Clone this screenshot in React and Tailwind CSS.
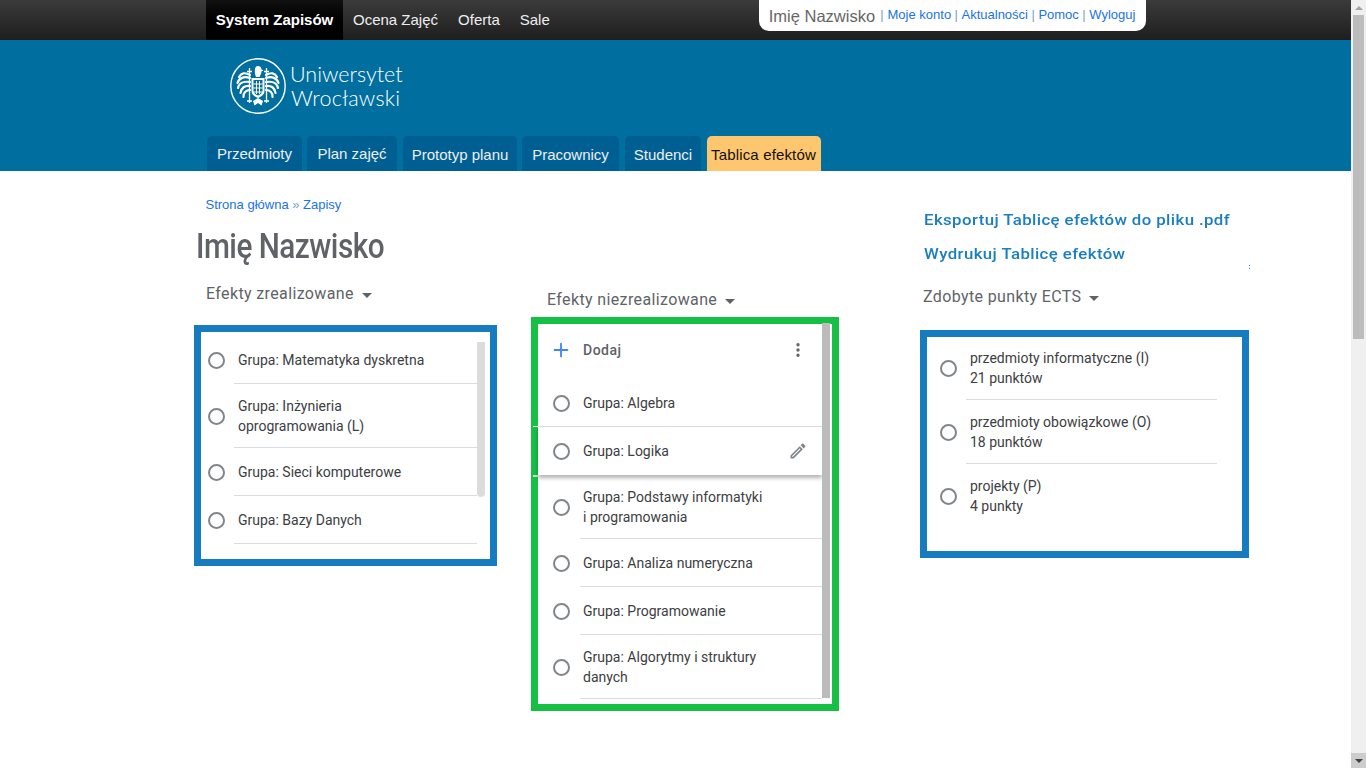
import React from "react";
import { MoreVertical, Plus } from "lucide-react";

const roboto = { fontFamily: "Roboto, sans-serif" };

const TABS = [
  { name: "Przedmioty", className: "w-[95px] pt-[1px]" },
  { name: "Plan zajęć", className: "w-[90px] ml-[5px] pt-[1px]" },
  { name: "Prototyp planu", className: "w-[114px] ml-[6px] pt-[4px]" },
  { name: "Pracownicy", className: "w-[97px] ml-[5px] pt-[4px]" },
  { name: "Studenci", className: "w-[76px] ml-[6px] pt-[4px]" },
];

const Radio = ({ className = "" }) => (
  <span className={`block w-[17px] h-[17px] shrink-0 rounded-full border-2 border-[#80868b] ${className}`} />
);

const Row = ({ lines, height = "h-12", dividerLeft = "ml-[33px]", radioMl = "ml-[7px]", textMl = "ml-[13px]", width = "w-[276px]", noDivider }) => (
  <div className={`${width}`}>
    <div className={`flex items-center ${height}`}>
      <Radio className={radioMl} />
      <div className={`${textMl} text-sm leading-5 text-[#3c4043]`}>
        {lines.map((l) => (
          <div key={l}>{l}</div>
        ))}
      </div>
    </div>
    {!noDivider && <div className={`h-px -mt-px bg-[#dadce0] ${dividerLeft}`} />}
  </div>
);

const Heading = ({ children, className = "" }) => (
  <div className={`flex items-center font-[Roboto] text-base tracking-[0.37px] text-[#5f6368] leading-5 ${className}`}>
    {children}
    <span className="ml-2 mt-[2px] border-x-[5px] border-x-transparent border-t-[5px] border-t-[#5f6368]" />
  </div>
);

const Eagle = () => (
  <svg width="58" height="58" viewBox="0 0 58 58" fill="none" className="shrink-0">
    <circle cx="29" cy="29" r="27.2" stroke="#fff" strokeWidth="1.4" />
    {/* skrzydla */}
    <g stroke="#fff" strokeWidth="2.2" strokeLinecap="round">
      <path d="M21 18C16 15 12 16 10 20M21 21C15 19 10 21 8.5 26M21 25C15 24 10 26 9 31M21 29C16 28 12 31 11.5 36M21 33C17 33 14 36 14.5 40" />
      <path d="M37 18C42 15 46 16 48 20M37 21C43 19 48 21 49.5 26M37 25C43 24 48 26 49 31M37 29C42 28 46 31 46.5 36M37 33C41 33 44 36 43.5 40" />
    </g>
    {/* glowa */}
    <path d="M29 9c2 0 3.500 1.500 3.500 3.500l2 1-2 .8c0 2-1 3.700-2 5.700h-3.500c-1-2.500-1.200-5-1.200-6.800C25.800 11 27 9 29 9z" fill="#fff" />
    {/* tarcza */}
    <path d="M22.500 21h13v13c0 3.500-3 5.500-6.500 7-3.500-1.500-6.500-3.500-6.500-7z" fill="#fff" />
    <path d="M24.500 23h9v10.500c0 2.500-2 4-4.500 5-2.500-1-4.500-2.500-4.500-5z" fill="#006f9f" />
    <path d="M27.500 24v13M30.500 24v13M24.500 27h9M24.500 31h9M24.500 35h9" stroke="#fff" strokeWidth="1" />
    {/* berla */}
    <path d="M20.500 11v35M37.500 11v35M18 14.500h5M35 14.500h5M18 44h5M35 44h5" stroke="#fff" strokeWidth="1.300" />
    {/* ogon */}
    <path d="M24 44l5-3 5 3-1.500 4.500L29 46l-3.500 2.500z" fill="#fff" />
  </svg>
);

const Scrollbar = () => (
  <div className="w-[15px] h-full shrink-0 flex flex-col bg-[#f0f0f0]">
    <div className="h-[15px] flex items-center justify-center">
      <span className="border-x-[4px] border-x-transparent border-b-[4px] border-b-[#a3a3a3]" />
    </div>
    <div className="ml-[2px] w-[11px] h-[324px] bg-[#bcbcbc]" />
    <div className="mt-auto h-[15px] flex items-center justify-center bg-[#cdcdcd]">
      <span className="border-x-[4px] border-x-transparent border-t-[4px] border-t-[#404040]" />
    </div>
  </div>
);

const App = () => {
  return (
    <div className="flex h-screen overflow-hidden bg-white" style={{ fontFamily: "'Liberation Sans', Arial, sans-serif" }}>
      <div className="w-[1351px] shrink-0">
        {/* gorny pasek */}
        <div className="h-10 flex bg-gradient-to-b from-[#3b3b3b] to-[#1e1e1e] pl-[206px] text-[15px] text-[#eeeeee]">
          <div className="w-[137px] h-10 flex items-center justify-center bg-gradient-to-b from-[#111] to-[#000] font-bold text-white">
            System Zapisów
          </div>
          <div className="ml-[10px] flex items-center h-10">Ocena Zajęć</div>
          <div className="ml-[20px] flex items-center h-10">Oferta</div>
          <div className="ml-[20px] flex items-center h-10">Sale</div>
          <div className="ml-[209px] w-[387px] h-[31px] flex items-center pl-[10px] pb-[1px] bg-white rounded-b-[10px] text-[13px] text-[#1a73e8]">
            <span className="text-[16.5px] mt-[2px] text-[#666666] mr-[5px]">Imię Nazwisko</span>
            <span className="text-[#7ba4c4]">|</span>
            <span className="ml-[4px]">Moje konto</span>
            <span className="mx-[3.5px] text-[#7ba4c4]">|</span>
            <span>Aktualności</span>
            <span className="mx-[3.5px] text-[#7ba4c4]">|</span>
            <span>Pomoc</span>
            <span className="mx-[3.5px] text-[#7ba4c4]">|</span>
            <span>Wyloguj</span>
          </div>
        </div>

        {/* naglowek */}
        <div className="h-[131px] bg-[#006f9f]">
          <div className="flex items-start pl-[229px] pt-[17px] h-[96px]">
            <Eagle />
            <div className="ml-[3px] mt-[5px] font-[Lato] font-light text-[21.5px] leading-6 text-white">
              <div>Uniwersytet</div>
              <div className="ml-[1px] tracking-[0.2px]">Wrocławski</div>
            </div>
          </div>
          <div className="flex pl-[207px]">
            {TABS.map((t) => (
              <div key={t.name} className={`h-[35px] flex items-center justify-center rounded-t-[5px] bg-[#005f92] text-[15px] text-[#eeeeee] ${t.className}`}>
                {t.name}
              </div>
            ))}
            <div className="w-[114px] ml-[6px] pt-[4px] pr-[1px] h-[35px] flex items-center justify-center rounded-t-[5px] bg-[#ffc670] text-[15px] tracking-[0.15px] text-[#111111]">
              Tablica efektów
            </div>
          </div>
        </div>

        {/* tresc */}
        <div className="flex pl-[194px]">
          {/* lewa kolumna */}
          <div className="w-[303px]">
            <div className="ml-[11.5px] mt-[26px] text-[13px] leading-[15px] text-[#1a73e8]">
              Strona główna <span className="text-[#7ba4c4]">»</span> Zapisy
            </div>
            <div className="ml-[2px] mt-[15px] h-[40px] font-[Roboto] font-medium text-[35px] leading-[40px] text-[#5f6368] tracking-[-0.6px] blur-[0.4px] origin-left scale-x-[0.85] whitespace-nowrap">
              Imię Nazwisko
            </div>
            <Heading className="ml-[12px] mt-[17px]">Efekty zrealizowane</Heading>
            <div className="relative mt-[21px] h-[241px] border-[7px] border-[#167bbf] pt-[4px]" style={roboto}>
              <Row lines={["Grupa: Matematyka dyskretna"]} />
              <Row lines={["Grupa: Inżynieria", "oprogramowania (L)"]} height="h-16" />
              <Row lines={["Grupa: Sieci komputerowe"]} />
              <Row lines={["Grupa: Bazy Danych"]} />
              <div className="absolute left-[276px] top-[10px] w-2 h-[155px] bg-[#dcdcdc] rounded-b-[4px]" />
            </div>
          </div>

          {/* srodkowa kolumna */}
          <div className="w-[308px] ml-[34px]">
            <Heading className="ml-[16px] mt-[119px]">Efekty niezrealizowane</Heading>
            <div className="relative mt-[7px] h-[394px] border-[7px] border-[#15c044]" style={roboto}>
              <div className="flex items-center w-[284px] h-[55px] pb-[4px] text-sm font-medium tracking-[0.5px] text-[#5f6368]">
                <Plus size={22} strokeWidth={2} className="ml-[12px] text-[#4285f4]" />
                <span className="ml-[11px]">Dodaj</span>
                <MoreVertical size={18} strokeWidth={2.5} className="ml-auto mr-[15px] text-[#5f6368]" />
              </div>
              <Row lines={["Grupa: Algebra"]} width="w-[284px]" radioMl="ml-[15px]" textMl="ml-[13px]" noDivider />
              <div className="relative flex items-center h-[49px] -mt-px w-[284px] bg-white border-t border-[#dadce0] shadow-[0_3px_4px_rgba(0,0,0,0.3)] z-10">
                <Radio className="ml-[15px]" />
                <span className="ml-[13px] text-sm text-[#3c4043]">Grupa: Logika</span>
                <svg width="20" height="20" viewBox="0 0 24 24" fill="#80868b" className="ml-auto mr-[14px]">
                  <path d="M14.06 9.020l.92.920L5.920 19H5v-.920l9.060-9.060M17.660 3c-.25 0-.51.1-.7.290l-1.830 1.830 3.750 3.750 1.830-1.830c.39-.39.39-1.020 0-1.410l-2.340-2.340c-.2-.2-.45-.29-.71-.29zm-3.600 3.190L3 17.250V21h3.750L17.810 9.940l-3.750-3.750z" />
                </svg>
              </div>
              <Row lines={["Grupa: Podstawy informatyki", "i programowania"]} height="h-16" width="w-[284px]" radioMl="ml-[15px]" dividerLeft="ml-[42px]" />
              <Row lines={["Grupa: Analiza numeryczna"]} width="w-[284px]" radioMl="ml-[15px]" dividerLeft="ml-[42px]" />
              <Row lines={["Grupa: Programowanie"]} width="w-[284px]" radioMl="ml-[15px]" dividerLeft="ml-[42px]" />
              <Row lines={["Grupa: Algorytmy i struktury", "danych"]} height="h-16" width="w-[284px]" radioMl="ml-[15px]" dividerLeft="ml-[42px]" />
              <div className="absolute left-[284px] -top-px w-2 h-[375px] bg-[#bbbbbb] z-20" />
              <div className="absolute -left-[5px] top-[102px] w-[5px] h-px bg-white" />
              <div className="absolute -left-[5px] top-[151px] w-[5px] h-[2px] bg-[#d8d8d8]" />
            </div>
          </div>

          {/* prawa kolumna */}
          <div className="relative w-[329px] ml-[81px]">
            <div className="ml-[4px] mt-[40px] font-[Roboto] font-medium text-[15px] leading-[18px] tracking-[0.36px] text-[#1a7fc0] origin-left scale-x-[1.12] whitespace-nowrap">
              Eksportuj Tablicę efektów do pliku .pdf
            </div>
            <div className="ml-[4px] mt-[16px] font-[Roboto] font-medium text-[15px] leading-[18px] tracking-[0.36px] text-[#1a7fc0] origin-left scale-x-[1.12] whitespace-nowrap">
              Wydrukuj Tablicę efektów
            </div>
            <div className="absolute left-[329px] top-[94px] w-px h-[4px] border-y border-[#1a7fc0]" />
            <Heading className="ml-[3px] mt-[24px]">Zdobyte punkty ECTS</Heading>
            <div className="relative mt-[23px] h-[228px] border-[7px] border-[#167bbf]" style={roboto}>
              <div className="-mt-px">
                <Row lines={["przedmioty informatyczne (I)", "21 punktów"]} height="h-16" width="w-[290px]" radioMl="ml-[13px]" textMl="ml-[13px]" dividerLeft="ml-[39px]" />
                <Row lines={["przedmioty obowiązkowe (O)", "18 punktów"]} height="h-16" width="w-[290px]" radioMl="ml-[13px]" textMl="ml-[13px]" dividerLeft="ml-[39px]" />
                <Row lines={["projekty (P)", "4 punkty"]} height="h-16" width="w-[290px]" radioMl="ml-[13px]" textMl="ml-[13px]" noDivider />
              </div>
            </div>
          </div>
        </div>
      </div>
      <Scrollbar />
    </div>
  );
};

export default App;
